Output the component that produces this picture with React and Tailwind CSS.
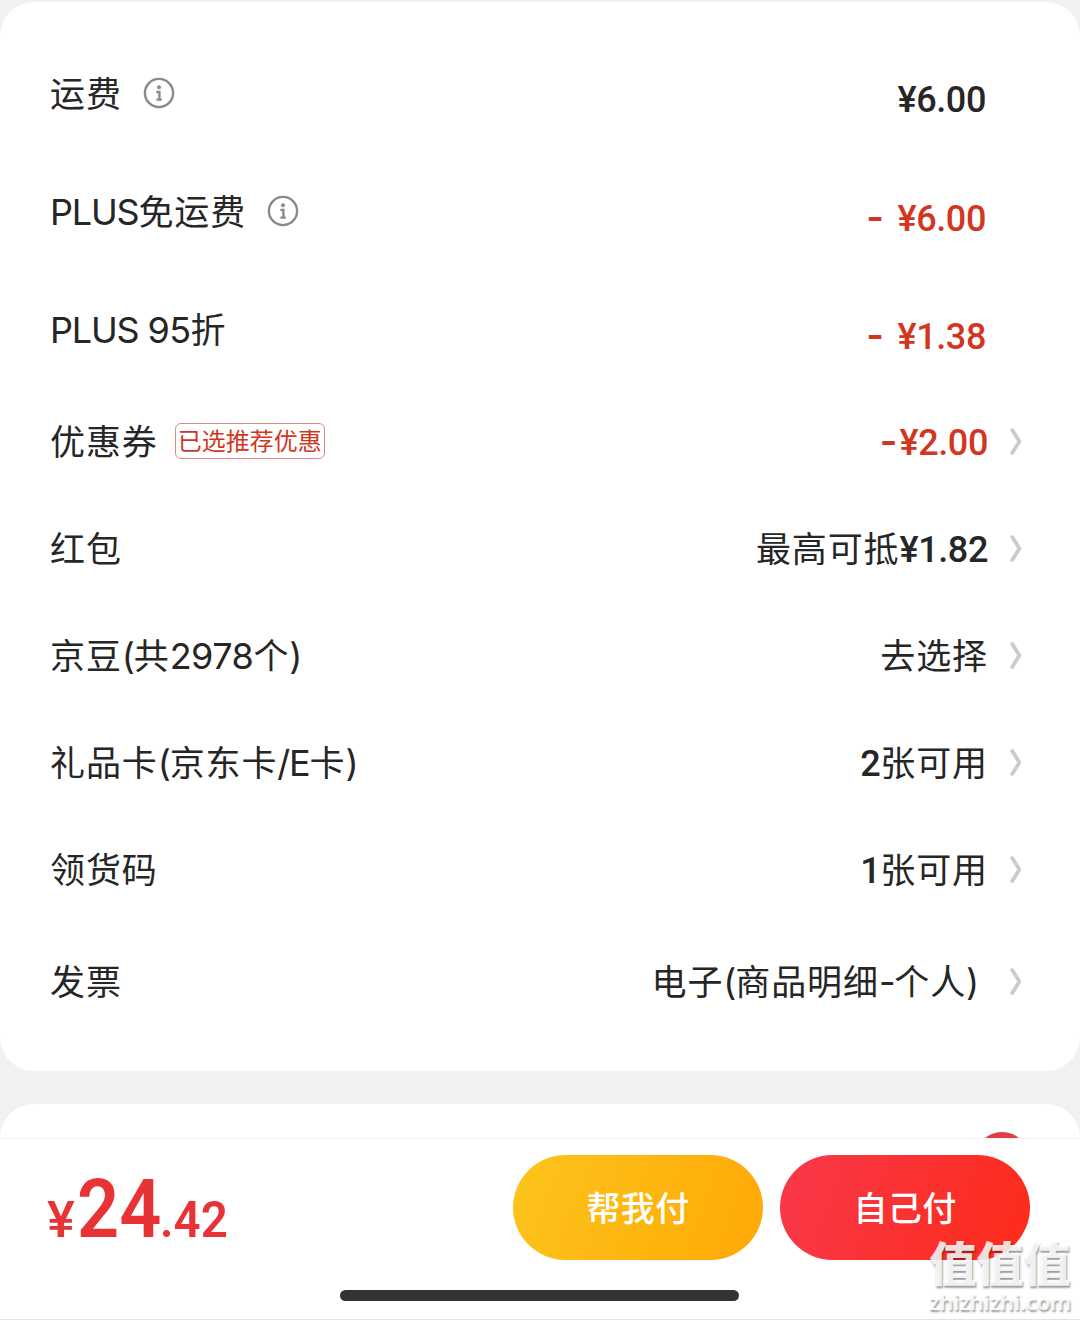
import clsx from 'clsx';

const rows = [
  { label: [['cjk', '运费']], info: true, value: [['num', '¥6.00']], tall: true },
  { label: [['lat', 'PLUS'], ['cjk', '免运费']], info: true, value: [['dash', '- '], ['num', '¥6.00']], red: true, tall: true },
  { label: [['lat', 'PLUS '], ['digits', '95'], ['cjk', '折']], value: [['dash', '- '], ['num', '¥1.38']], red: true, tall: true },
  { label: [['cjk', '优惠券']], tag: '已选推荐优惠', value: [['dash', '-'], ['num', '¥2.00']], red: true, link: true },
  { label: [['cjk', '红包']], value: [['cjk', '最高可抵'], ['num', '¥1.82']], link: true },
  { label: [['cjk', '京豆'], ['lat', '('], ['cjk', '共'], ['digits', '2978'], ['cjk', '个'], ['lat', ')']], value: [['cjk', '去选择']], link: true },
  { label: [['cjk', '礼品卡'], ['lat', '('], ['cjk', '京东卡'], ['lat', '/E'], ['cjk', '卡'], ['lat', ')']], value: [['num', '2'], ['cjk', '张可用']], link: true },
  { label: [['cjk', '领货码']], value: [['num', '1'], ['cjk', '张可用']], link: true },
  { label: [['cjk', '发票']], value: [['cjk', '电子'], ['lat', '('], ['cjk', '商品明细'], ['lat', '-'], ['cjk', '个人'], ['lat', ')']], link: true, invoice: true },
];

const runStyles = {
  cjk: 'font-["Noto_Sans_CJK_SC",sans-serif] text-[35px] tracking-[0.9px]',
  lat: 'font-["Inter",sans-serif] tracking-[-1.2px]',
  digits: 'font-["Inter",sans-serif] tracking-[-0.5px]',
  num: 'font-["Roboto",sans-serif] font-[540] tracking-[-0.4px]',
  dash: 'font-["Inter",sans-serif] font-semibold text-[38px] tracking-[2px]',
};

function Runs({ parts }) {
  return parts.map(([kind, text], i) => (
    <span key={i} className={runStyles[kind]}>{text}</span>
  ));
}

function InfoIcon() {
  return (
    <svg width="32" height="32" viewBox="0 0 32 32" fill="none" stroke="#8a8a8a">
      <circle cx="16" cy="16" r="14.1" strokeWidth="2.4" />
      <circle cx="16" cy="10.2" r="2" fill="#8a8a8a" stroke="none" />
      <path d="M13.4 15h3v7.6M13.4 22.6h5.4" strokeWidth="2.4" />
    </svg>
  );
}

function Chevron() {
  return (
    <svg width="14" height="30" viewBox="0 0 14 30" fill="none" stroke="#cbcbcb" strokeWidth="3.8" strokeLinecap="round" strokeLinejoin="round">
      <path d="M3.2 3 10.4 14.5 3.2 26" />
    </svg>
  );
}

function Row({ label, value, info, tag, red, link, tall, invoice }) {
  return (
    <div className={clsx('flex shrink-0 items-center', tall ? 'h-[118px]' : invoice ? 'h-[117px]' : 'h-[107px]')}>
      <div className="flex items-center text-[36px] leading-[52px] whitespace-pre">
        <span className="pb-[1px]"><Runs parts={label} /></span>
        {info && <span className="ml-[21px]"><InfoIcon /></span>}
        {tag && (
          <span className="mb-[2px] ml-[17px] flex h-[36px] w-[150px] items-center justify-center rounded-[6px] border border-[#d98a80] pb-[2px] text-[24px] leading-none text-[#d0371f] font-['Noto_Sans_CJK_SC',sans-serif]">
            {tag}
          </span>
        )}
      </div>
      <div
        className={clsx(
          'ml-auto text-[36px] leading-[52px] whitespace-pre',
          red && 'text-[#d2361f]',
          tall ? 'pt-[13px]' : red ? 'pt-[1px]' : 'pb-[1px]',
          link ? (invoice ? 'mr-[31px]' : 'mr-[21px]') : 'mr-[37px]'
        )}
      >
        <Runs parts={value} />
      </div>
      {link && <Chevron />}
    </div>
  );
}

function PayButton({ children, className }) {
  return (
    <button className={clsx('h-[105px] w-[250px] rounded-full pb-[2px] text-[34px] font-medium tracking-[0.4px] text-white font-["Noto_Sans_CJK_SC",sans-serif]', className)}>
      {children}
    </button>
  );
}

export default function App() {
  return (
    <div className="relative flex h-[1320px] w-[1080px] flex-col overflow-hidden bg-[#f1f1f1] pt-[2px] text-[#262626]">
      <section className="flex h-[1069px] shrink-0 flex-col rounded-[34px] bg-white pt-[32px] pr-[57px] pl-[50px]">
        {rows.map((row, i) => <Row key={i} {...row} />)}
      </section>

      {/* next card, mostly hidden by the pay bar */}
      <section className="mt-[33px] flex h-[34px] shrink-0 justify-end overflow-hidden rounded-t-[34px] bg-white pt-[28px] pr-[51px]">
        <div className="size-[54px] shrink-0 rounded-full bg-[#dc4045]" />
      </section>

      <footer className="flex h-[182px] shrink-0 flex-col border-t border-b border-t-[#f0f0f0] border-b-[#e2e2e2] bg-white">
        <div className="flex h-[137px] items-start pt-[16px] pr-[50px] pl-[47px]">
          <div className="flex h-[105px] w-[200px] items-baseline pt-[2px] font-medium text-[#e73336] font-['Roboto',sans-serif]">
            <span className="w-[30px] origin-left scale-x-105 text-[50px]">¥</span>
            <span className="w-[83px] origin-left scale-x-90 text-[82px] leading-[105px] font-semibold">24</span>
            <span className="origin-left scale-x-95 text-[50px] font-[560]">.42</span>
          </div>
          <div className="ml-auto flex gap-[17px]">
            <PayButton className="bg-linear-[110deg] from-[#fcc51c] to-[#ffa806]">帮我付</PayButton>
            <PayButton className="bg-linear-[110deg] from-[#f9384b] to-[#fd2b18]">自己付</PayButton>
          </div>
        </div>
        <div className="mt-[14px] mr-[1px] h-[11px] w-[399px] self-center rounded-full bg-[#333]" />
      </footer>

      {/* site watermark */}
      <div className="absolute right-[9px] bottom-[6px] flex w-[142px] flex-col items-center whitespace-nowrap text-white/85 [text-shadow:1px_2px_2px_rgba(0,0,0,0.4)]">
        <span className="text-[47px] leading-[54px] font-black font-['Noto_Sans_CJK_SC',sans-serif]">值值值</span>
        <span className="text-[22px] leading-[26px] font-semibold tracking-[-0.2px] font-['Noto_Sans',sans-serif]">zhizhizhi.com</span>
      </div>
    </div>
  );
}
